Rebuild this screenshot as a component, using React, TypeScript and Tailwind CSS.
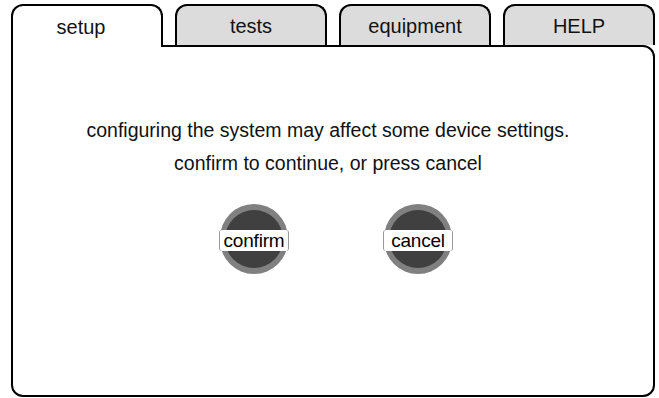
const tabs = [
  { label: "setup", active: true },
  { label: "tests", active: false },
  { label: "equipment", active: false },
  { label: "HELP", active: false },
];

const RoundButton = ({ label }: { label: string }) => {
  return (
    <div className="relative flex h-[70px] w-[68px] items-center justify-center">
      <div className="flex h-[70px] w-[68px] items-center justify-center rounded-full bg-[#808080]">
        <div className="h-[58px] w-[58px] rounded-full bg-[#404040]" />
      </div>
      {/* label sits over the knob */}
      <span className="absolute -left-[1px] -right-[1px] top-[26px] flex h-[21px] items-center justify-center rounded-[3px] border-x border-[#9a9a9a] bg-white text-[19px] leading-none tracking-[-0.2px] text-black">
        {label}
      </span>
    </div>
  );
};

export default function App() {
  return (
    <div
      className="h-[398px] w-[659px] bg-white pl-[11px] pt-[4px]"
      style={{ fontFamily: '"Liberation Sans", Arial, sans-serif' }}
    >
      <div className="flex items-end gap-[12px]">
        {tabs.map((t) =>
          t.active ? (
            <div
              key={t.label}
              className="relative z-10 -mb-[2px] flex h-[43px] w-[152px] items-center justify-center rounded-t-[12px] border-2 border-b-0 border-black bg-white pr-[12px] text-[20px] text-[#111]"
            >
              {t.label}
            </div>
          ) : (
            <div
              key={t.label}
              className="flex h-[41px] w-[152px] items-center justify-center rounded-t-[12px] border-2 border-b-0 border-black bg-[#dcdcdc] pt-[1px] text-[20px] text-[#111]"
            >
              {t.label}
            </div>
          )
        )}
      </div>
      <div className="flex h-[352px] w-[644px] flex-col items-center rounded-b-[12px] rounded-tr-[12px] border-2 border-black pr-[10px] pt-[72px] text-[19.5px] leading-[22px] text-[#111]">
        <p>configuring the system may affect some device settings.</p>
        <p className="mt-[11px]">confirm to continue, or press cancel</p>
        <div className="ml-[16px] mt-[30px] flex gap-[96px]">
          <RoundButton label="confirm" />
          <RoundButton label="cancel" />
        </div>
      </div>
    </div>
  );
}
